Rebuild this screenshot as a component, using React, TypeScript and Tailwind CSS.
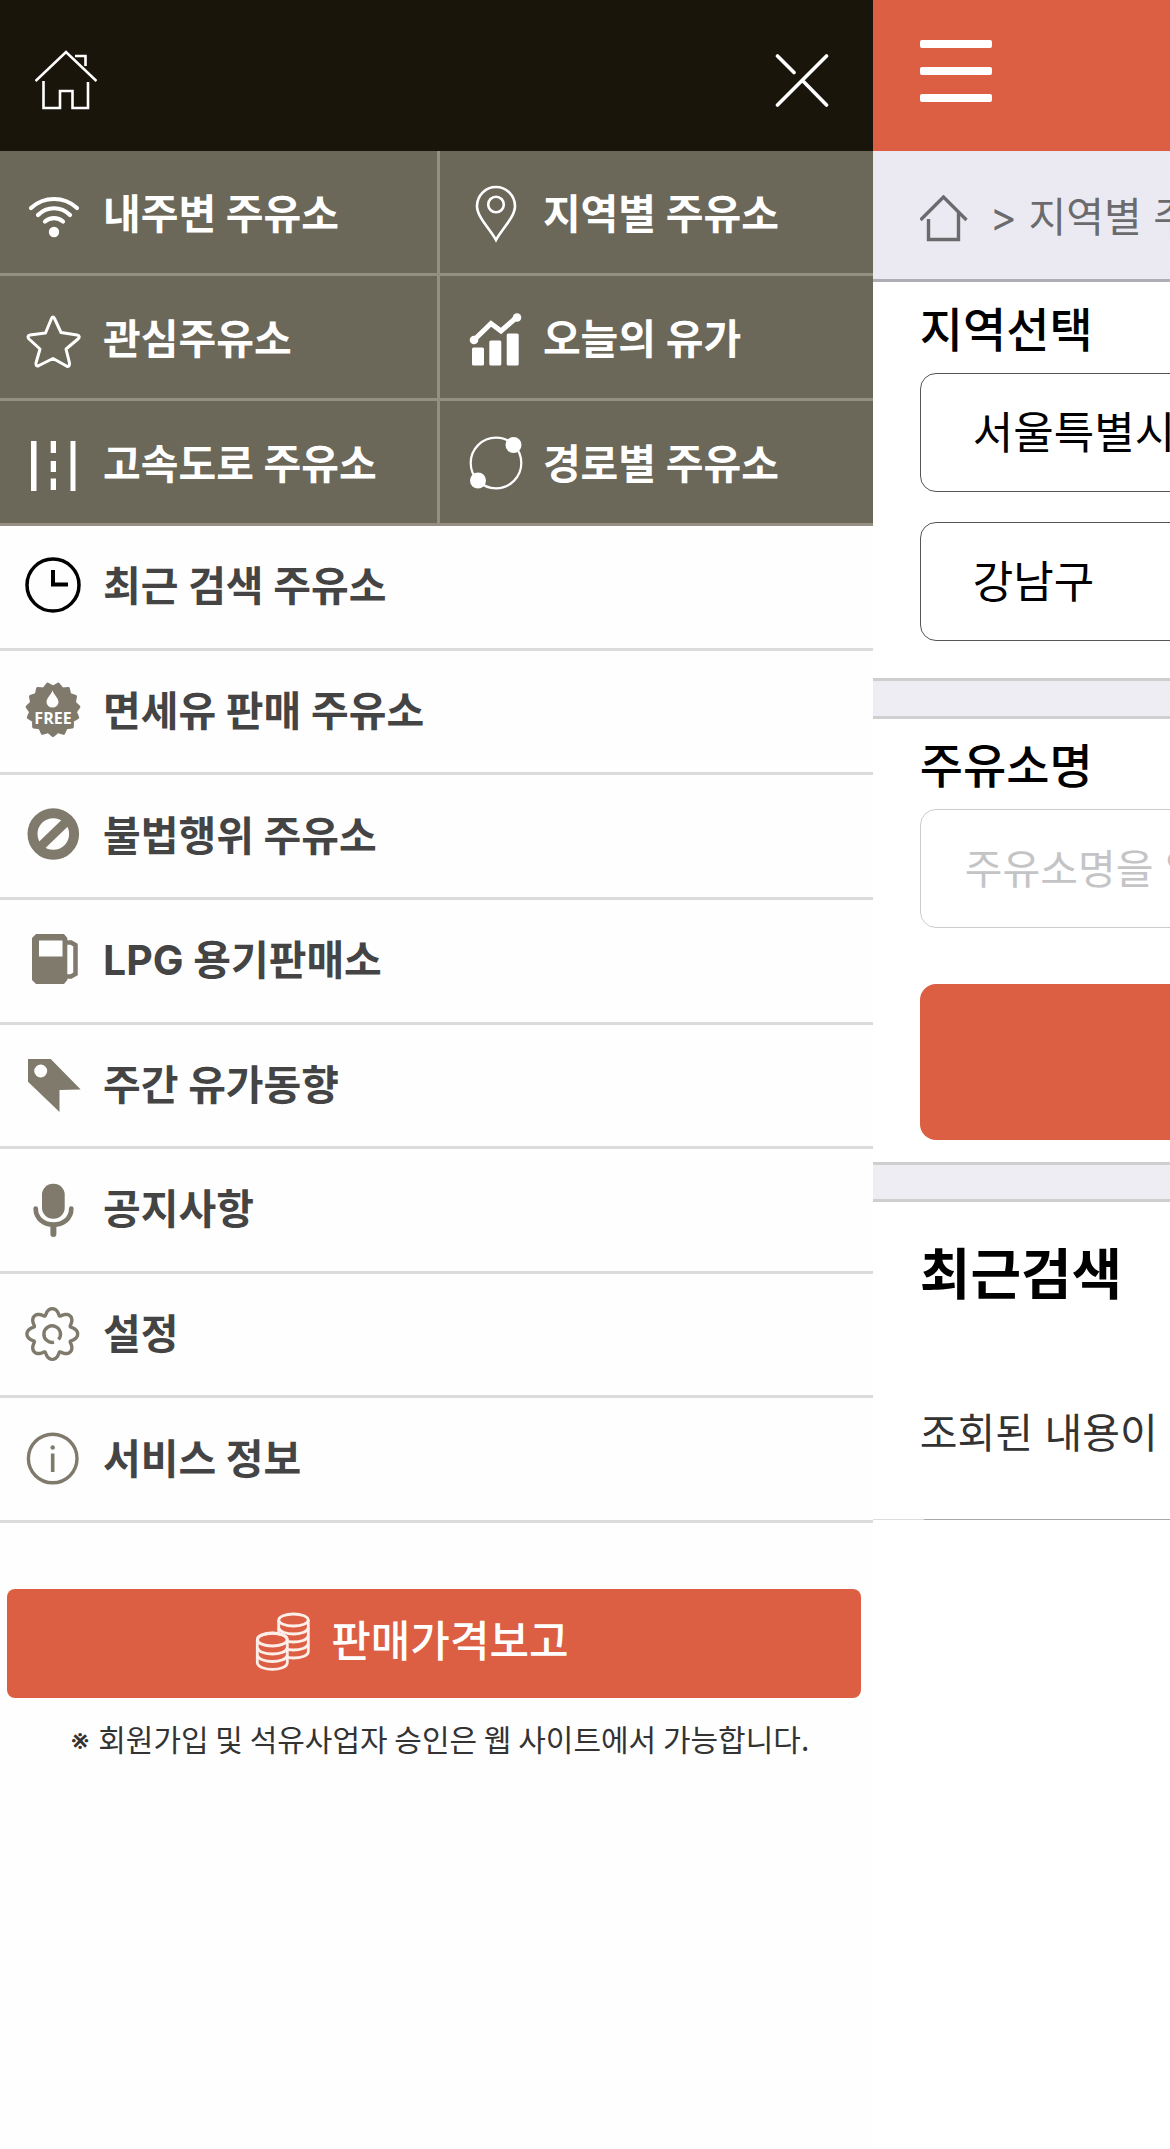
import React from "react";

type IconProps = { children: React.ReactNode };

function MenuIcon({ children }: IconProps) {
  return (
    <svg viewBox="0 0 56 56" className="size-14 shrink-0 overflow-visible" fill="none" aria-hidden="true">
      {children}
    </svg>
  );
}

const OLIVE = "#7f7a6c";

function polar(cx: number, cy: number, r: number, deg: number) {
  const a = (deg * Math.PI) / 180;
  return `${(cx + r * Math.cos(a)).toFixed(2)},${(cy + r * Math.sin(a)).toFixed(2)}`;
}

function gearPoints(cx: number, cy: number) {
  const pts: string[] = [];
  for (let deg = 0; deg < 360; deg += 3) {
    const wave = Math.cos((deg * 8 * Math.PI) / 180);
    const skew = 3 * Math.sin((deg * 8 * Math.PI) / 180);
    pts.push(polar(cx, cy, 22.4 + 3 * wave, deg + skew));
  }
  return pts.join(" ");
}

function badgePoints(cx: number, cy: number) {
  const pts: string[] = [];
  for (let k = 0; k < 30; k++) {
    pts.push(polar(cx, cy, k % 2 === 0 ? 26 : 22.5, 90 + k * 12));
  }
  return pts.join(" ");
}

const topItems = [
  {
    label: "내주변 주유소",
    icon: (
      <MenuIcon>
        <g stroke="#fff" strokeWidth="4.2" strokeLinecap="round">
          <path d="M5 24C18 12 38 12 51 24" />
          <path d="M12 31C21 22 35 22 44 31" />
          <path d="M19 37.500C24 33 32 33 37 37.500" />
        </g>
        <circle cx="28" cy="48" r="5.200" fill="#fff" />
      </MenuIcon>
    ),
  },
  {
    label: "지역별 주유소",
    icon: (
      <MenuIcon>
        <g stroke="#fff" strokeWidth="2.600">
          <path d="M30 56C24 45 11 33 11 22A19 19 0 0 1 49 22C49 33 36 45 30 56Z" />
          <circle cx="30" cy="20.500" r="7.800" />
        </g>
      </MenuIcon>
    ),
  },
  {
    label: "관심주유소",
    icon: (
      <MenuIcon>
        <path
          d="M25.500 9.500Q27 6.500 28.500 9.500L35 23.500L51 26Q55 27 52 30L40 40L43.500 54Q44 58.500 40.500 57L27 49.500L13 56.500Q9.500 58 10 54L14 40L3 30Q0.500 27 4 26L19.500 24Z"
          stroke="#fff"
          strokeWidth="3"
          strokeLinejoin="round"
        />
      </MenuIcon>
    ),
  },
  {
    label: "오늘의 유가",
    icon: (
      <MenuIcon>
        <path d="M8 31L25 14.500L35 22L51 8" stroke="#fff" strokeWidth="5" />
        <g fill="#fff">
          <circle cx="8" cy="31" r="4.300" />
          <circle cx="51" cy="8.500" r="4.300" />
          <rect x="6" y="38.500" width="12" height="18" rx="1.500" />
          <rect x="23.300" y="31.500" width="12" height="25" rx="1.500" />
          <rect x="40.700" y="24.500" width="12" height="32" rx="1.500" />
        </g>
      </MenuIcon>
    ),
  },
  {
    label: "고속도로 주유소",
    icon: (
      <MenuIcon>
        <g fill="#fff">
          <rect x="5" y="7" width="5.500" height="50" />
          <rect x="44.500" y="7" width="5" height="50" />
          <rect x="24.700" y="7" width="5.300" height="12" />
          <rect x="24.700" y="27" width="5.300" height="11" />
          <rect x="24.700" y="44.500" width="5.300" height="11.500" />
        </g>
      </MenuIcon>
    ),
  },
  {
    label: "경로별 주유소",
    icon: (
      <MenuIcon>
        <circle cx="30" cy="29" r="25.300" stroke="#fff" strokeWidth="2.200" />
        <circle cx="47.500" cy="11" r="8" fill="#fff" />
        <circle cx="12" cy="46.500" r="8" fill="#fff" />
      </MenuIcon>
    ),
  },
];

const listItems = [
  {
    label: "최근 검색 주유소",
    icon: (
      <MenuIcon>
        <circle cx="27" cy="26" r="26" stroke="#000" strokeWidth="3.500" />
        <path d="M27 11V25.500H42" stroke="#000" strokeWidth="4" />
      </MenuIcon>
    ),
  },
  {
    label: "면세유 판매 주유소",
    icon: (
      <MenuIcon>
        <polygon points={badgePoints(27, 26.5)} fill={OLIVE} stroke={OLIVE} strokeWidth="3" strokeLinejoin="round" />
        <path d="M26.500 7.500C28 12 32.500 15 32.500 19A6 5.500 0 0 1 20.500 19C20.500 15 25 12 26.500 7.500Z" fill="#fff" />
        <text x="27" y="40.500" textAnchor="middle" className="font-['Open_Sans'] text-[16px] font-bold" fill="#fff">
          FREE
        </text>
      </MenuIcon>
    ),
  },
  {
    label: "불법행위 주유소",
    icon: (
      <MenuIcon>
        <circle cx="27.300" cy="26" r="20.800" stroke={OLIVE} strokeWidth="10" />
        <path d="M14 39L41 13" stroke={OLIVE} strokeWidth="9" />
      </MenuIcon>
    ),
  },
  {
    label: "LPG 용기판매소",
    icon: (
      <MenuIcon>
        <path
          d="M10 1H38L41.300 5V47L38 51H10L6 47V5ZM13 7.500V23.500H36.500V7.500Z"
          fill={OLIVE}
          fillRule="evenodd"
        />
        <path d="M40 9.500H45L49.500 12V41L45 43.500H40" stroke={OLIVE} strokeWidth="4.500" />
      </MenuIcon>
    ),
  },
  {
    label: "주간 유가동향",
    icon: (
      <MenuIcon>
        <path
          d="M2 2H24.700L54.700 32.500L33.500 33V55L2 24.700ZM8.200 14A6.500 6.500 0 1 0 21.200 14A6.500 6.500 0 1 0 8.200 14Z"
          fill={OLIVE}
          fillRule="evenodd"
        />
      </MenuIcon>
    ),
  },
  {
    label: "공지사항",
    icon: (
      <MenuIcon>
        <rect x="16" y="1.700" width="22.700" height="35" rx="11" fill={OLIVE} />
        <g stroke={OLIVE} strokeLinecap="round">
          <path d="M9.700 26.500C9.700 48 45.300 48 45.300 26.500" strokeWidth="4.700" />
          <path d="M27.400 44V52" strokeWidth="6" />
        </g>
      </MenuIcon>
    ),
  },
  {
    label: "설정",
    icon: (
      <MenuIcon>
        <g stroke={OLIVE} strokeWidth="3.400" strokeLinejoin="round">
          <polygon points={gearPoints(26.3, 27)} />
          <path d="M28 35.200A8.300 8.300 0 1 1 32.500 32.500" />
        </g>
      </MenuIcon>
    ),
  },
  {
    label: "서비스 정보",
    icon: (
      <MenuIcon>
        <circle cx="26.700" cy="27.500" r="24.300" stroke={OLIVE} strokeWidth="3.400" />
        <path d="M26.700 22.500V41" stroke={OLIVE} strokeWidth="3.600" />
        <circle cx="26.700" cy="16.500" r="2.200" fill={OLIVE} />
      </MenuIcon>
    ),
  },
];

function CoinsIcon() {
  return (
    <svg viewBox="0 0 56 60" className="h-[60px] w-14 shrink-0" fill="none" aria-hidden="true">
      <g stroke="#fdeeea" strokeWidth="2.800">
        <ellipse cx="38.500" cy="8" rx="14.800" ry="6" />
        <path d="M23.700 8V40C25 48 52 48 53.300 40V8" />
        <path d="M23.700 16C26 24 51 24 53.300 16M23.700 24C26 32 51 32 53.300 24M23.700 32C26 40 51 40 53.300 32" />
        <path d="M2.300 28V51C4 59.500 31 59.500 32.300 51V28C31 19 4 19 2.300 28Z" fill="#dc5f43" />
        <ellipse cx="17.300" cy="27.500" rx="15" ry="6.500" />
        <path d="M2.300 36C5 44 30 44 32.300 36M2.300 43.500C5 51.500 30 51.500 32.300 43.500" />
      </g>
    </svg>
  );
}

function Drawer() {
  return (
    <aside className="w-[74.6%] shrink-0 bg-[#fefefe]">
      <header className="flex h-[151px] items-center justify-between bg-[#1a150b] pt-2 pr-[44px] pl-[35px]">
        <button type="button" aria-label="홈">
          <svg viewBox="0 0 62 60" className="h-[60px] w-[62px]" fill="none" stroke="#fff" strokeWidth="2.600" aria-hidden="true">
            <path d="M0.500 31L31 2L61.500 31" />
            <path d="M40 6H50.500V16" />
            <path d="M8.500 31V58H25V41H37.500V58H53V32" />
          </svg>
        </button>
        <button type="button" aria-label="닫기">
          <svg viewBox="0 0 54 54" className="size-[54px]" fill="none" stroke="#fff" strokeWidth="3.600" strokeLinecap="round" aria-hidden="true">
            <path d="M2.500 52L51.500 3M2.500 3L19 19.500M27.500 27.500L51.500 52" />
          </svg>
        </button>
      </header>
      <nav>
        <ul className="grid grid-cols-[440fr_433fr] bg-[#6b6759]">
          {topItems.map((item) => (
            <li key={item.label} className="border-b-3 border-[#938f82] odd:border-r-3">
              <a href="#" className="flex h-[122px] items-center gap-[21px] pl-[26px] text-[41px] leading-none font-bold whitespace-nowrap text-white">
                {item.icon}
                <span className="pt-1">{item.label}</span>
              </a>
            </li>
          ))}
        </ul>
        <ul className="grid min-h-[997px] auto-rows-fr">
          {listItems.map((item) => (
            <li key={item.label} className="border-b-3 border-[#dbdbdb]">
              <a href="#" className="flex h-full items-center gap-[21px] pl-[26px] text-[41px] leading-none font-bold whitespace-nowrap text-[#444]">
                {item.icon}
                <span>{item.label}</span>
              </a>
            </li>
          ))}
        </ul>
      </nav>
      <div className="pt-[66px] pr-3 pl-[7px]">
        <button
          type="button"
          className="flex h-[109px] w-full items-center justify-center gap-5 rounded-lg bg-[#dc5f43] pr-11 pb-1 text-[43px] leading-none font-medium text-white"
        >
          <CoinsIcon />
          <span>판매가격보고</span>
        </button>
        <p className="pt-[22px] pl-3 text-center font-['Noto_Sans_CJK_KR',sans-serif] text-[30px] leading-9 whitespace-nowrap text-[#333]">
          <span className="font-['Inter']">※ </span>회원가입 및 석유사업자 승인은 웹 사이트에서 가능합니다.
        </p>
      </div>
    </aside>
  );
}

const labelClass = "block pb-[13px] text-[47px] leading-[60px] font-medium";

const selectClass =
  "block h-[119px] w-full appearance-none rounded-2xl border border-[#555] bg-white pl-[52px] text-[44px] text-black";

function Page() {
  return (
    <main className="w-full shrink-0 bg-white">
      <header className="h-[151px] bg-[#dc5f43] px-[47px] pt-10">
        <button type="button" aria-label="메뉴" className="flex w-[72px] flex-col gap-[19px]">
          <span className="h-2 w-full rounded-xs bg-white" />
          <span className="h-2 w-full rounded-xs bg-white" />
          <span className="h-2 w-full rounded-xs bg-white" />
        </button>
      </header>
      <nav className="flex h-[131px] items-center border-b-3 border-[#b0aeb5] bg-[#ebeaf2] px-[47px] pt-1 text-[41px] leading-none whitespace-nowrap text-[#6b6b6e]">
        <a href="#" aria-label="홈" className="pt-1">
          <svg viewBox="0 0 48 48" className="size-12" fill="none" stroke="#6b6b6e" strokeWidth="3.400" aria-hidden="true">
            <path d="M0.500 25L23.500 2L46.500 25" />
            <path d="M8.500 24V44.500H38.500V18" />
          </svg>
        </a>
        <span className="pl-[22px]">&gt; 지역별 주유소</span>
      </nav>
      <section className="px-[47px] pt-[18px] pb-[37px]">
        <label htmlFor="sido" className={labelClass}>
          지역선택
        </label>
        <select id="sido" className={selectClass}>
          <option>서울특별시</option>
        </select>
        <div className="pt-[30px]">
          <select id="sigungu" aria-label="시군구" className={selectClass}>
            <option>강남구</option>
          </select>
        </div>
      </section>
      <div className="h-[41px] border-y-3 border-[#cfcfd0] bg-[#eeedf3]" />
      <section className="px-[47px] pt-[17px] pb-[22px]">
        <label htmlFor="station" className={labelClass}>
          주유소명
        </label>
        <input
          id="station"
          type="text"
          placeholder="주유소명을 입력하세요"
          className="block h-[119px] w-full rounded-2xl border border-[#ccc] bg-white px-11 text-[41px] text-black placeholder:text-[#c4c4c6]"
        />
        <button type="button" aria-label="조회" className="mt-14 block h-[156px] w-full rounded-2xl bg-[#dc5f43]" />
      </section>
      <div className="h-10 border-y-3 border-[#cfcfd0] bg-[#eeedf3]" />
      <section className="border-b border-[#ddd] pt-9 pl-[47px]">
        <h2 className="text-[55px] leading-[72px] font-bold">최근검색</h2>
        <p className="pt-[93px] pb-14 text-[41px] leading-[60px] text-[#333]">조회된 내용이</p>
        <hr className="-mb-px ml-1 border-[#aaa]" />
      </section>
    </main>
  );
}

export default function App() {
  return (
    <div className="flex min-h-screen w-full overflow-hidden bg-[#fefefe] font-['Inter','Noto_Sans_CJK_KR',sans-serif]">
      <Drawer />
      <Page />
    </div>
  );
}
